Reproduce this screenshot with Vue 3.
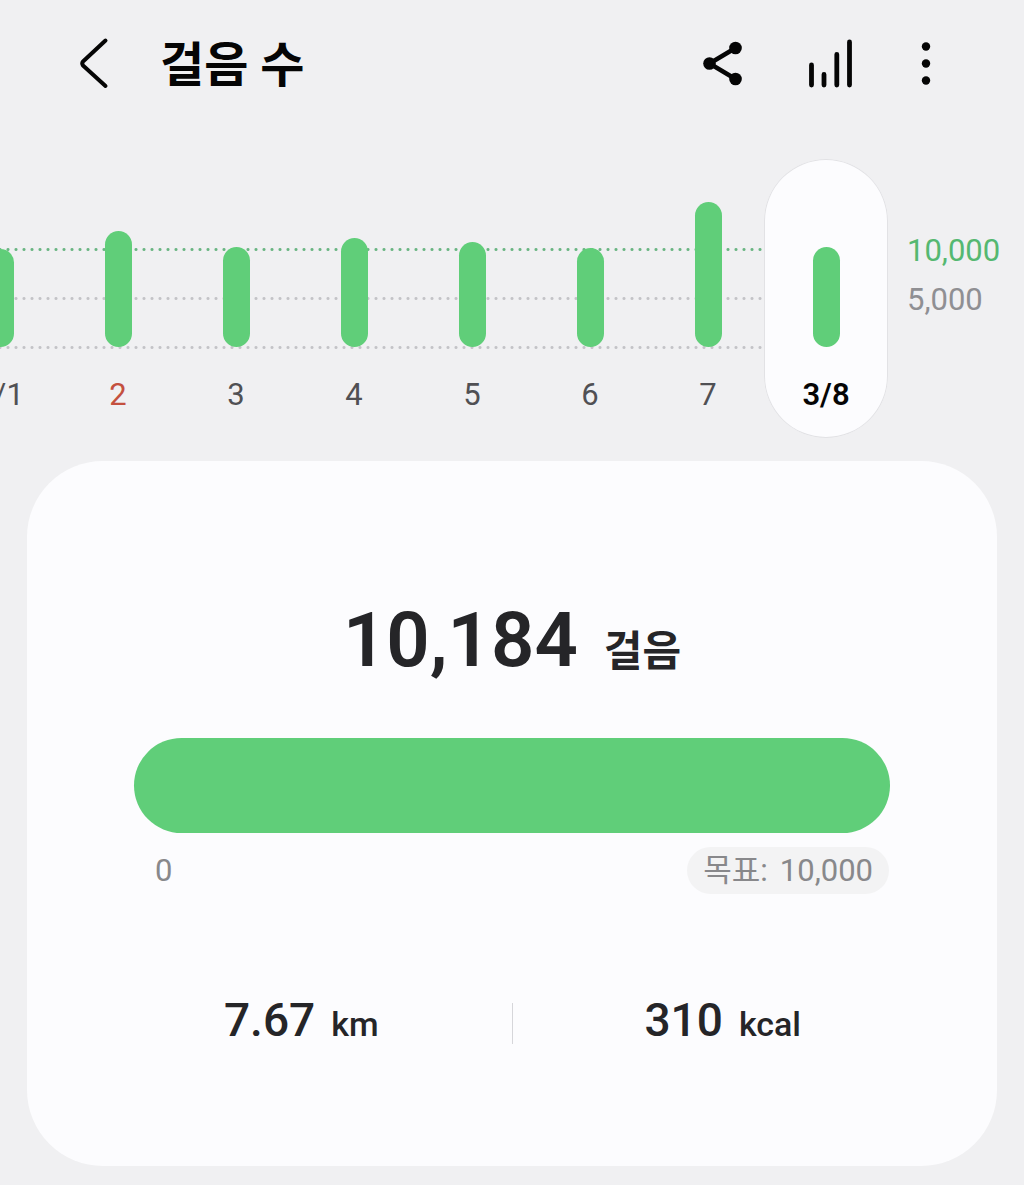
<script setup>
import { ref } from 'vue'

const GOAL = 10000
// height in px of a bar that just reaches the goal
const GOAL_HEIGHT = 98

const days = [
  { label: '3/1', steps: 10050 },
  { label: '2', steps: 11840, holiday: true },
  { label: '3', steps: 10210 },
  { label: '4', steps: 11090 },
  { label: '5', steps: 10740 },
  { label: '6', steps: 10080 },
  { label: '7', steps: 14810 },
  { label: '3/8', steps: 10184 },
]

const selected = ref(7)

function barHeight(steps) {
  return Math.round((steps / GOAL) * GOAL_HEIGHT) + 'px'
}
</script>

<template>
  <div class="page">
    <header class="header">
      <button type="button" class="header__btn" aria-label="뒤로">
        <svg width="56" height="56" viewBox="0 0 56 56" fill="none" stroke="#050505" stroke-width="4" stroke-linecap="round" stroke-linejoin="round">
          <path d="M39.5 5.5L17 26.5Q15.5 28.5 17 30.5L39.5 51" />
        </svg>
      </button>
      <h1 class="header__title">걸음 수</h1>
      <div class="header__actions">
        <button type="button" class="header__btn" aria-label="공유">
          <svg width="56" height="56" viewBox="0 0 56 56" fill="#050505">
            <path d="M40.5 13L14.5 28.5L40.5 44" fill="none" stroke="#050505" stroke-width="4.5" />
            <circle cx="14.5" cy="28.5" r="6.3" />
            <circle cx="40.5" cy="13" r="6.3" />
            <circle cx="40.5" cy="44" r="6.3" />
          </svg>
        </button>
        <button type="button" class="header__btn" aria-label="차트">
          <svg width="56" height="56" viewBox="0 0 56 56" fill="none" stroke="#050505" stroke-width="4.8" stroke-linecap="round">
            <path d="M8.5 30V50M21 39.5V50M33.8 19.5V50M46.5 7V50" />
          </svg>
        </button>
        <button type="button" class="header__btn header__btn--narrow" aria-label="더보기">
          <svg width="30" height="56" viewBox="0 0 30 56" fill="#050505">
            <circle cx="15" cy="11.5" r="4.2" />
            <circle cx="15" cy="28.5" r="4.2" />
            <circle cx="15" cy="45.5" r="4.2" />
          </svg>
        </button>
      </div>
    </header>

    <section class="chart" aria-label="일별 걸음 수">
      <div class="plot">
        <div class="plot__lines">
          <div class="plot__line plot__line--goal"></div>
          <div class="plot__line"></div>
          <div class="plot__line"></div>
        </div>
        <div class="plot__days">
          <button
            v-for="(day, i) in days"
            :key="day.label"
            type="button"
            class="day"
            :class="{ 'day--selected': selected === i, 'day--holiday': day.holiday }"
            :aria-pressed="selected === i"
            @click="selected = i"
          >
            <span class="day__track">
              <span class="day__bar" :style="{ height: barHeight(day.steps) }"></span>
            </span>
            <span class="day__label">{{ day.label }}</span>
          </button>
        </div>
      </div>
      <div class="axis">
        <span class="axis__goal">10,000</span>
        <span>5,000</span>
      </div>
    </section>

    <main class="card">
      <p class="total">
        <strong class="total__value">10,184</strong>
        <span class="total__unit">걸음</span>
      </p>
      <div class="progress" role="progressbar" aria-label="목표 달성" aria-valuemin="0" aria-valuemax="10000" aria-valuenow="10000"></div>
      <div class="scale">
        <span class="scale__min">0</span>
        <span class="scale__goal"><span>목표:</span><span>10,000</span></span>
      </div>
      <div class="stats">
        <p class="stat"><strong class="stat__value">7.67</strong><span class="stat__unit">km</span></p>
        <div class="stats__divider"></div>
        <p class="stat"><strong class="stat__value">310</strong><span class="stat__unit">kcal</span></p>
      </div>
    </main>
  </div>
</template>

<style>
body {
  margin: 0;
  background: #f0f0f2;
}
</style>

<style scoped>
.page {
  overflow: hidden;
  padding-bottom: 19px;
  background: #f0f0f2;
  color: #252528;
  font-family: Roboto, "Noto Sans CJK KR", sans-serif;
}

button {
  margin: 0;
  padding: 0;
  border: 0;
  background: none;
  color: inherit;
  font: inherit;
  cursor: pointer;
}

.header {
  display: flex;
  align-items: center;
  height: 126px;
  padding: 0 83px 0 66px;
}

.header__btn {
  width: 56px;
  height: 56px;
}

.header__btn--narrow {
  width: 30px;
}

.header__btn svg {
  display: block;
}

.header__title {
  margin: 0 0 0 38px;
  padding-top: 6px;
  color: #050505;
  font-size: 48px;
  font-weight: 700;
  line-height: 64px;
}

.header__actions {
  display: flex;
  gap: 52px;
  margin-left: auto;
}

.chart {
  display: flex;
  margin-top: 33px;
}

.plot {
  display: grid;
  flex: 1;
  min-width: 0;
  margin-left: -59px;
}

.plot__lines,
.plot__days {
  grid-area: 1 / 1;
}

.plot__lines {
  display: flex;
  flex-direction: column;
  gap: 46px;
  margin-right: 120px;
  padding-top: 89px;
}

.plot__line {
  height: 3px;
  background: radial-gradient(circle, #c3c3c7 1px, transparent 2px) 55px 0 / 8px 3px repeat-x;
}

.plot__line--goal {
  background-image: radial-gradient(circle, #69b582 1px, transparent 2px);
}

.plot__days {
  display: grid;
  grid-template-columns: repeat(8, 1fr);
}

.day {
  display: flex;
  flex-direction: column;
  align-items: center;
  height: 279px;
  margin: 0 -3px;
  border-radius: 62px;
  color: #505054;
  font-size: 31px;
}

.day__track {
  display: flex;
  align-items: flex-end;
  height: 188px;
}

.day__bar {
  width: 27px;
  border-radius: 14px;
  background: #60ce79;
}

.day__label {
  margin-top: 28px;
  line-height: 40px;
}

.day--holiday {
  color: #c4503f;
}

.day--selected {
  background: #fcfcfe;
  box-shadow: inset 0 0 0 1px #e2e2e5;
  color: #050505;
  font-weight: 600;
}

.axis {
  display: flex;
  flex-direction: column;
  width: 117px;
  margin-left: 22px;
  padding-top: 67px;
  color: #8f8f93;
  font-size: 31px;
  line-height: 49px;
}

.axis__goal {
  color: #55b871;
}

.card {
  margin: 23px 27px 0;
  padding: 135px 0 111px;
  border-radius: 76px;
  background: #fcfcfe;
}

.total {
  display: flex;
  align-items: baseline;
  justify-content: center;
  gap: 26px;
  margin: 0;
  line-height: 88px;
}

.total__value {
  font-size: 76px;
  font-weight: 600;
}

.total__unit {
  font-size: 42px;
  font-weight: 700;
}

.progress {
  height: 95px;
  margin: 42px 107px 0;
  border-radius: 48px;
  background: #60ce79;
}

.scale {
  display: flex;
  justify-content: space-between;
  margin: 14px 108px 0;
  color: #88888b;
  font-size: 31px;
  line-height: 47px;
}

.scale__min {
  margin-left: 20px;
}

.scale__goal {
  display: flex;
  gap: 12px;
  height: 47px;
  padding: 0 16px;
  border-radius: 24px;
  background: #f3f3f4;
}

.stats {
  display: grid;
  grid-template-columns: 1fr 1px 1fr;
  align-items: center;
  margin: 95px 64px 0;
}

.stats__divider {
  height: 41px;
  margin-top: 2px;
  background: #d6d6da;
}

.stat {
  display: flex;
  align-items: baseline;
  justify-content: center;
  gap: 16px;
  margin: 0;
  line-height: 62px;
}

.stat__value {
  font-size: 46px;
  font-weight: 500;
}

.stat__unit {
  font-size: 34px;
  font-weight: 500;
}
</style>
